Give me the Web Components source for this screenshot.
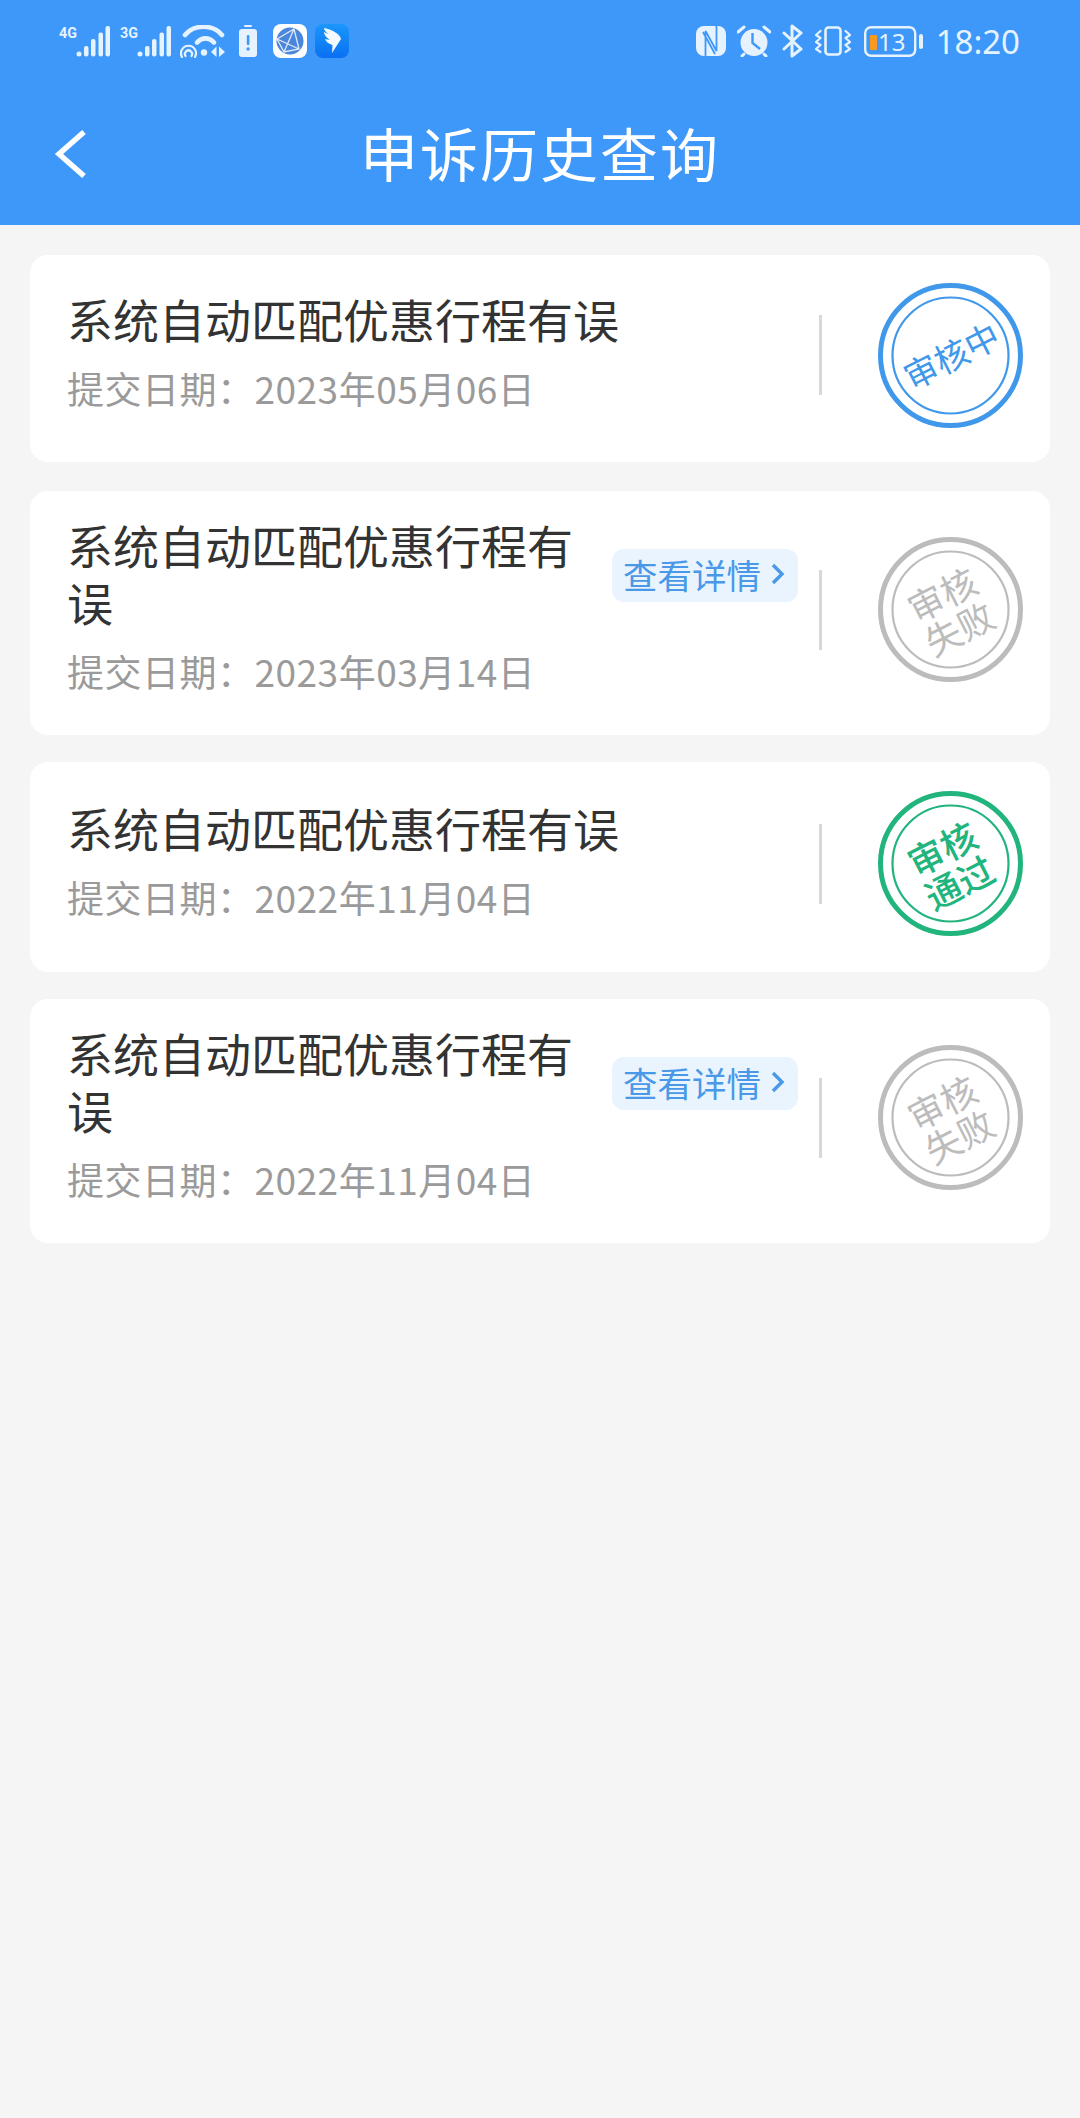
<!DOCTYPE html>
<html lang="zh">
<head>
<meta charset="utf-8">
<title>申诉历史查询</title>
<style>
    html, body {
        margin: 0;
        min-height: 2118px;
        background: #f5f5f5;
        font-family: "Noto Sans CJK SC", "Noto Sans", sans-serif;
    }
</style>
</head>
<body>
<app-header heading="申诉历史查询"></app-header>
<appeal-list>
    <appeal-card style="min-height:207px;margin-bottom:2px" date="提交日期：2023年05月06日" status="pending">系统自动匹配优惠行程有误</appeal-card>
    <appeal-card date="提交日期：2023年03月14日" status="failed" details>系统自动匹配优惠行程有误</appeal-card>
    <appeal-card style="min-height:210px" date="提交日期：2022年11月04日" status="passed">系统自动匹配优惠行程有误</appeal-card>
    <appeal-card date="提交日期：2022年11月04日" status="failed" details>系统自动匹配优惠行程有误</appeal-card>
</appeal-list>

<script>
class SignalBars extends HTMLElement {
    constructor() {
        super()
        this.attachShadow({mode: 'open'}).innerHTML = `
            <style>
                :host { display: block; width: 51px; height: 32px; }
                svg { display: block; }
                text { font: 700 15px "Roboto", sans-serif; fill: #e6f3ff; }
            </style>
            <svg width="51" height="32" viewBox="0 0 51 32" fill="#e6f3ff">
                <text x="0" y="13" textLength="18" lengthAdjust="spacingAndGlyphs">${this.getAttribute('label')}</text>
                <circle cx="20" cy="29" r="2.5"/>
                <rect x="25" y="21" width="4.500" height="10.500" rx="2"/>
                <rect x="32" y="14" width="4.500" height="17.500" rx="2"/>
                <rect x="39.500" y="7.500" width="4.500" height="24" rx="2"/>
                <rect x="46.500" y="1" width="4.500" height="30.500" rx="2"/>
            </svg>`
    }
}
customElements.define('signal-bars', SignalBars)

class StatusBar extends HTMLElement {
    constructor() {
        super()
        this.attachShadow({mode: 'open'}).innerHTML = `
            <style>
                :host {
                    display: flex;
                    justify-content: space-between;
                    align-items: center;
                    height: 82px;
                    padding: 0 60px 0 59px;
                    color: #e6f3ff;
                }
                .side { display: flex; align-items: center; }
                svg { display: block; flex: none; }
                .time {
                    font: 400 33px/1 "Noto Sans", sans-serif;
                    margin-left: 13px;
                }
                .level { font: 400 24px "Noto Sans", sans-serif; fill: #e6f3ff; }
            </style>
            <div class="side">
                <signal-bars label="4G"></signal-bars>
                <signal-bars label="3G" style="margin-left:10px"></signal-bars>
                <svg style="margin-left:9px" width="45" height="33" viewBox="0 0 45 33" fill="none" stroke="#e6f3ff" stroke-linecap="round">
                    <path d="M5 10 C14 -1 33 -1 42 10" stroke-width="4.600"/>
                    <path d="M17 17.500 C22 12 29 12 34 17.500" stroke-width="4.600"/>
                    <circle cx="24" cy="27.500" r="3.200" fill="#e6f3ff" stroke="none"/>
                    <path d="M2 32 A7.500 7.500 0 1 1 15 32" stroke-width="2.200"/>
                    <path d="M5.500 31 A3.600 3.600 0 1 1 11.500 31" stroke-width="2.200"/>
                    <path d="M36.500 21.500 L36.500 32 L31 27 Z" fill="#e6f3ff" stroke="none"/>
                    <path d="M39 21.500 L39 32 L45 27 Z" fill="#e6f3ff" stroke="none"/>
                </svg>
                <svg style="margin-left:14px" width="18" height="32" viewBox="0 0 18 32">
                    <rect x="5" y="0" width="8" height="2" rx="1" fill="#e6f3ff"/>
                    <rect x="0" y="4" width="18" height="28" rx="3" fill="#e6f3ff"/>
                    <rect x="7.800" y="10" width="2.600" height="10" rx="1" fill="#3d98fa"/>
                    <circle cx="9.100" cy="24" r="1.700" fill="#3d98fa"/>
                </svg>
                <svg style="margin-left:16px" width="34" height="34" viewBox="0 0 34 34" fill="none">
                    <rect width="34" height="34" rx="8" fill="#fff"/>
                    <circle cx="17" cy="17" r="13.500" fill="#4a86dc"/>
                    <path d="M4 15 L21 5 L26 25 L11 28 Z M4 15 L26 25 M21 5 L11 28" stroke="#dfeaf9" stroke-width="1.300"/>
                </svg>
                <svg style="margin-left:8px" width="34" height="34" viewBox="0 0 34 34">
                    <defs>
                        <linearGradient id="wing" x1="0" y1="0" x2="0" y2="1">
                            <stop offset="0" stop-color="#1a97fb"/>
                            <stop offset="1" stop-color="#0a70f2"/>
                        </linearGradient>
                    </defs>
                    <rect width="34" height="34" rx="8" fill="url(#wing)"/>
                    <path d="M9 4 C18 6 25 10 26 15 L17 29 L17.500 21 C14 20 11 18 10 15 L15 16 C12 14 9 11 9 8 L13 10 C11 8 9 6 9 4 Z" fill="#f4f9ff"/>
                </svg>
            </div>
            <div class="side">
                <svg width="30" height="30" viewBox="0 0 30 30">
                    <rect width="30" height="30" rx="8" fill="#e6f3ff"/>
                    <path d="M9.500 30 L9.500 5 L20.500 25 L20.500 0 M7 6 L19 28" fill="none" stroke="#3d98fa" stroke-width="1.800"/>
                </svg>
                <svg style="margin-left:11px" width="34" height="32" viewBox="0 0 34 32">
                    <circle cx="17" cy="17.500" r="13.500" fill="#e6f3ff"/>
                    <path d="M15.500 8 L15.500 18 L23 24" fill="none" stroke="#3d98fa" stroke-width="2.400"/>
                    <path d="M1 7 L7 2 M33 7 L27 2 M7 29 L5 31 M27 29 L29 31" stroke="#e6f3ff" stroke-width="3" stroke-linecap="round"/>
                </svg>
                <svg style="margin-left:11px" width="21" height="34" viewBox="0 0 21 34" fill="none" stroke="#e6f3ff" stroke-width="3" stroke-linejoin="round" stroke-linecap="round">
                    <path d="M2 9 L19 25 L10 32 L10 2 L19 9 L2 25"/>
                </svg>
                <svg style="margin-left:11px" width="38" height="30" viewBox="0 0 38 30" fill="none" stroke="#e6f3ff" stroke-linejoin="round" stroke-linecap="round">
                    <rect x="11.500" y="1.500" width="15" height="27" rx="3" stroke-width="2.600"/>
                    <path d="M6.500 5 L2 9 L6.500 12 L2 16 L6.500 19 L2 23 L6.500 26" stroke-width="2.200"/>
                    <path d="M31.500 5 L36 9 L31.500 12 L36 16 L31.500 19 L36 23 L31.500 26" stroke-width="2.200"/>
                </svg>
                <svg style="margin-left:12px" width="59" height="31" viewBox="0 0 59 31">
                    <rect x="1.200" y="1.200" width="50" height="28.600" rx="6" fill="none" stroke="#e6f3ff" stroke-width="2.400"/>
                    <rect x="6" y="9" width="7" height="15" rx="1" fill="#f79a1f"/>
                    <text class="level" x="14" y="24.500">13</text>
                    <rect x="55" y="8" width="4" height="15" rx="2" fill="#e6f3ff"/>
                </svg>
                <span class="time">18:20</span>
            </div>`
    }
}
customElements.define('status-bar', StatusBar)

class AppHeader extends HTMLElement {
    constructor() {
        super()
        this.attachShadow({mode: 'open'}).innerHTML = `
            <style>
                :host { display: block; height: 225px; background: #3d98fa; color: #fff; }
                nav {
                    display: grid;
                    grid-template-columns: 1fr auto 1fr;
                    align-items: center;
                    height: 143px;
                }
                svg { display: block; margin-left: 52px; }
                h1 {
                    margin: 0;
                    font: 400 58px/1 "Noto Sans CJK SC", sans-serif;
                    letter-spacing: 2px;
                    padding-bottom: 4px;
                }
            </style>
            <status-bar></status-bar>
            <nav>
                <svg width="36" height="50" viewBox="0 0 36 50" fill="none" stroke="#fff" stroke-width="5.500">
                    <path d="M32 3 L7 25 L32 47"/>
                </svg>
                <h1>${this.getAttribute('heading')}</h1>
            </nav>`
    }
}
customElements.define('app-header', AppHeader)

class AppealList extends HTMLElement {
    constructor() {
        super()
        this.attachShadow({mode: 'open'}).innerHTML = `
            <style>
                :host {
                    display: flex;
                    flex-direction: column;
                    gap: 27px;
                    padding: 30px 30px 0;
                }
            </style>
            <slot></slot>`
    }
}
customElements.define('appeal-list', AppealList)

class DetailLink extends HTMLElement {
    constructor() {
        super()
        this.attachShadow({mode: 'open'}).innerHTML = `
            <style>
                :host {
                    display: flex;
                    align-items: center;
                    flex: none;
                    box-sizing: border-box;
                    width: 186px;
                    height: 53px;
                    padding: 0 0 3px 11px;
                    border-radius: 12px;
                    background: #e9f4ff;
                    color: #4a98e8;
                    font-size: 34.500px;
                    line-height: 1;
                    white-space: nowrap;
                }
                svg { margin-left: 10px; flex: none; }
            </style>
            <slot></slot>
            <svg width="14" height="22" viewBox="0 0 14 22" fill="none" stroke="#4a98e8" stroke-width="3.400">
                <path d="M2 2 L11 11 L2 20"/>
            </svg>`
    }
}
customElements.define('detail-link', DetailLink)

const STAMPS = {
    pending: {color: '#4098ea', size: 34, weight: 400, lines: ['审核中']},
    failed: {color: '#bcbcbc', size: 36, weight: 400, lines: ['审核', '失败']},
    passed: {color: '#22b47d', size: 36, weight: 500, lines: ['审核', '通过']},
}

class AuditStamp extends HTMLElement {
    constructor() {
        super()
        const stamp = STAMPS[this.getAttribute('status')]
        this.attachShadow({mode: 'open'}).innerHTML = `
            <style>
                :host {
                    display: grid;
                    place-items: center;
                    flex: none;
                    width: 145px;
                    height: 145px;
                    color: ${stamp.color};
                }
                svg, .text { grid-area: 1 / 1; }
                .text {
                    transform: rotate(-27deg);
                    font-size: ${stamp.size}px;
                    font-weight: ${stamp.weight};
                    line-height: 38px;
                    text-align: center;
                    white-space: nowrap;
                }
            </style>
            <svg width="145" height="145" viewBox="0 0 145 145" fill="none" stroke="currentColor">
                <circle cx="72.500" cy="72.500" r="70" stroke-width="5"/>
                <circle cx="72.500" cy="72.500" r="58" stroke-width="2.200"/>
            </svg>
            <div class="text">${stamp.lines.map(line => `<div>${line}</div>`).join('')}</div>`
    }
}
customElements.define('audit-stamp', AuditStamp)

class AppealCard extends HTMLElement {
    constructor() {
        super()
        const details = this.hasAttribute('details') ? '<detail-link>查看详情</detail-link>' : ''
        this.attachShadow({mode: 'open'}).innerHTML = `
            <style>
                :host {
                    display: flex;
                    align-items: center;
                    box-sizing: border-box;
                    min-height: 207px;
                    padding: 25px 27px 39px 37px;
                    border-radius: 18px;
                    background: #fff;
                }
                .main { flex: 1; min-width: 0; }
                .top { display: flex; align-items: flex-start; gap: 16px; }
                .title {
                    flex: 1;
                    min-width: 0;
                    font-size: 46px;
                    line-height: 57px;
                    color: #333;
                }
                detail-link { margin-top: 33px; }
                .date {
                    margin-top: 16px;
                    font-size: 37px;
                    line-height: 50px;
                    letter-spacing: 0.5px;
                    color: #9a9a9a;
                    white-space: nowrap;
                }
                .divider {
                    flex: none;
                    width: 3px;
                    height: 80px;
                    margin: 7px 56px 0 21px;
                    background: #d8d8d8;
                }
                audit-stamp { margin-bottom: -7px; }
            </style>
            <div class="main">
                <div class="top">
                    <div class="title"><slot></slot></div>
                    ${details}
                </div>
                <div class="date">${this.getAttribute('date')}</div>
            </div>
            <div class="divider"></div>
            <audit-stamp status="${this.getAttribute('status')}"></audit-stamp>`
    }
}
customElements.define('appeal-card', AppealCard)
</script>
</body>
</html>
